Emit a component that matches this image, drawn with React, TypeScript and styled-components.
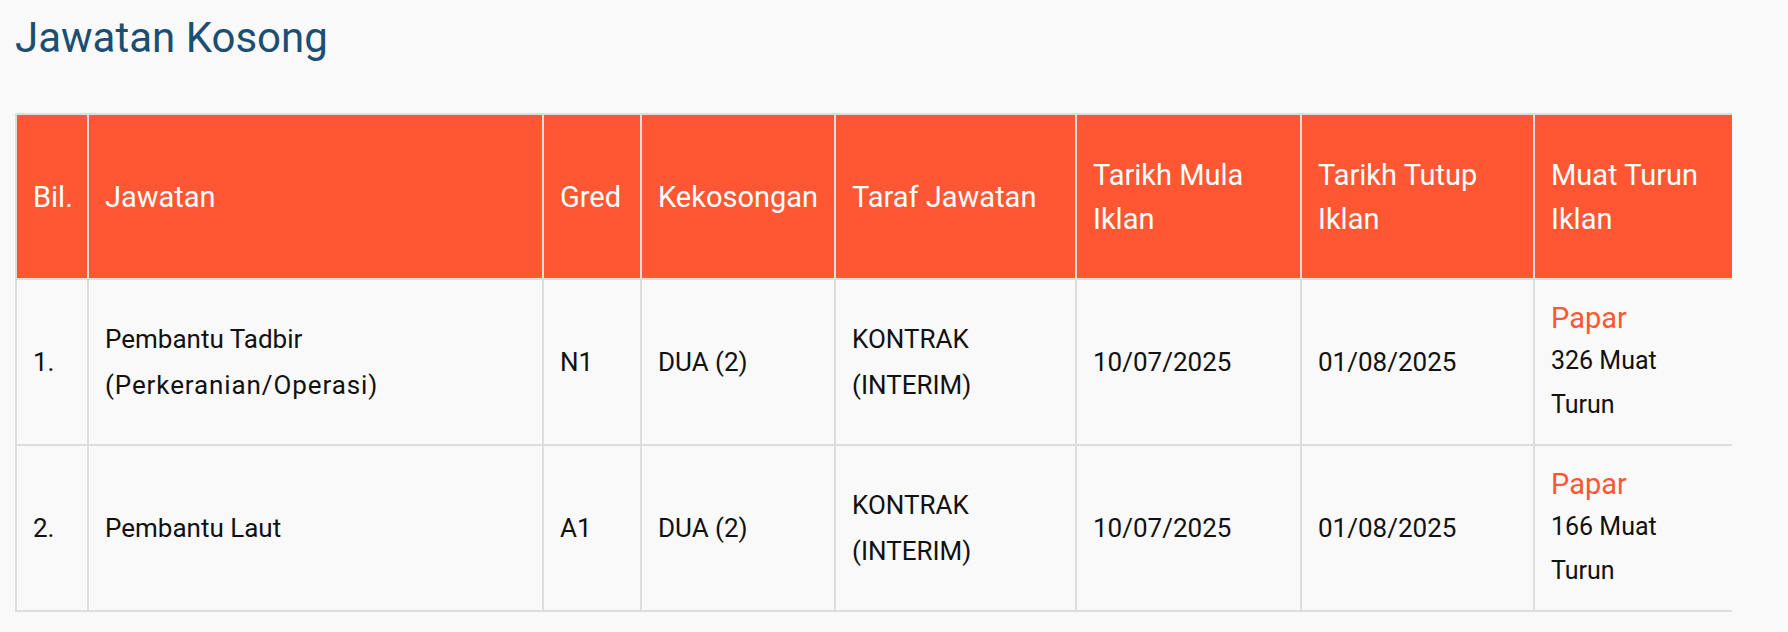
import React from "react";
import styled, { createGlobalStyle } from "styled-components";

const GlobalStyle = createGlobalStyle`
  html, body {
    margin: 0;
    padding: 0;
    background: #f9f9f9;
    font-family: Roboto, "Liberation Sans", sans-serif;
  }
`;

const Page = styled.main`
  padding: 13px 0 0 15px;
`;

const Title = styled.h2`
  margin: 0;
  font-size: 42px;
  line-height: 50px;
  font-weight: 400;
  color: #1b4f72;
`;

const TableWrap = styled.div`
  margin-top: 50px;
  width: 1717px;
  overflow: hidden;
`;

const Table = styled.table`
  border-collapse: collapse;
  table-layout: fixed;
  width: 1722px;
`;

const HeadCell = styled.th`
  background: #ff5733;
  color: #ffffff;
  font-weight: 400;
  font-size: 29px;
  line-height: 44px;
  text-align: left;
  vertical-align: middle;
  padding: 0 16px;
  height: 163px;
  border: 2px solid #dddddd;
`;

const Cell = styled.td`
  color: #111111;
  font-size: 26px;
  line-height: 46px;
  text-align: left;
  vertical-align: middle;
  padding: 0 16px;
  height: 164px;
  border: 2px solid #dddddd;
`;

const Wide = styled.span`
  letter-spacing: 0.9px;
`;

const DownloadStack = styled.div`
  display: flex;
  flex-direction: column;
  align-items: flex-start;
`;

const Link = styled.a`
  color: #ff5733;
  font-size: 29px;
  line-height: 42px;
  text-decoration: none;
`;

const Downloads = styled.span`
  max-width: 140px;
  font-size: 25px;
  line-height: 44px;
`;

const columns = [
  { label: "Bil.", width: 72 },
  { label: "Jawatan", width: 455 },
  { label: "Gred", width: 98 },
  { label: "Kekosongan", width: 194 },
  { label: "Taraf Jawatan", width: 241 },
  { label: "Tarikh Mula Iklan", width: 225 },
  { label: "Tarikh Tutup Iklan", width: 233 },
  { label: "Muat Turun Iklan", width: 204 },
];

const rows = [
  {
    no: "1.",
    jawatan: ["Pembantu Tadbir", "(Perkeranian/Operasi)"],
    gred: "N1",
    kosong: "DUA (2)",
    mula: "10/07/2025",
    tutup: "01/08/2025",
    muat: 326,
  },
  {
    no: "2.",
    jawatan: ["Pembantu Laut"],
    gred: "A1",
    kosong: "DUA (2)",
    mula: "10/07/2025",
    tutup: "01/08/2025",
    muat: 166,
  },
];

export default function App() {
  return (
    <>
      <GlobalStyle />
      <Page>
        <Title>Jawatan Kosong</Title>
        <TableWrap>
          <Table>
            <colgroup>
              {columns.map((c) => (
                <col key={c.label} style={{ width: c.width }} />
              ))}
            </colgroup>
            <thead>
              <tr>
                {columns.map((c) => (
                  <HeadCell key={c.label}>{c.label}</HeadCell>
                ))}
              </tr>
            </thead>
            <tbody>
              {rows.map((r) => (
                <tr key={r.no}>
                  <Cell>{r.no}</Cell>
                  <Cell>
                    {r.jawatan[0]}
                    {r.jawatan[1] && (
                      <>
                        <br />
                        <Wide>{r.jawatan[1]}</Wide>
                      </>
                    )}
                  </Cell>
                  <Cell>{r.gred}</Cell>
                  <Cell>{r.kosong}</Cell>
                  <Cell>
                    KONTRAK
                    <br />
                    (INTERIM)
                  </Cell>
                  <Cell>{r.mula}</Cell>
                  <Cell>{r.tutup}</Cell>
                  <Cell>
                    <DownloadStack>
                      <Link href="#">Papar</Link>
                      <Downloads>{r.muat} Muat Turun</Downloads>
                    </DownloadStack>
                  </Cell>
                </tr>
              ))}
            </tbody>
          </Table>
        </TableWrap>
      </Page>
    </>
  );
}
